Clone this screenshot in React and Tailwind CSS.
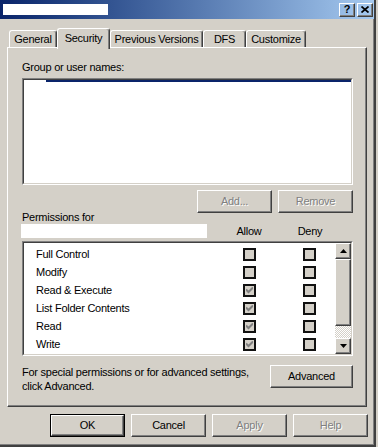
import React from "react";

const raised =
  "border border-t-white border-l-white border-r-[#404040] border-b-[#404040] shadow-[inset_-1px_-1px_0_#808080]";

function Sunken({ className = "", innerClass = "", children }) {
  return (
    <div className={"border border-t-[#808080] border-l-[#808080] border-r-white border-b-white " + className}>
      <div className={"h-full w-full border border-t-[#404040] border-l-[#404040] border-r-[#d4d0c8] border-b-[#d4d0c8] " + innerClass}>
        {children}
      </div>
    </div>
  );
}

function Btn({ children, disabled, def, className = "" }) {
  const base = "flex items-center justify-center h-[23px] w-[75px] box-border ";
  const txt = disabled ? " text-[#808080] [text-shadow:1px_1px_0_#ffffff]" : " text-black";
  if (def) {
    return (
      <div className={"h-[23px] w-[75px] border border-black " + className}>
        <div className={"flex h-full w-full items-center justify-center border border-t-white border-l-white border-r-[#404040] border-b-[#404040] shadow-[inset_-1px_-1px_0_#808080]" + txt}>
          {children}
        </div>
      </div>
    );
  }
  return <div className={base + raised + txt + " " + className}>{children}</div>;
}

function Check({ checked }) {
  return (
    <div className="flex h-[13px] w-[13px] items-center justify-center border-2 border-[#111111] bg-[#d4d0c8]">
      {checked && (
        <svg width="7" height="7" viewBox="0 0 7 7">
          <path d="M0 2.5 L2.5 5 L7 0.5" stroke="#808080" strokeWidth="2" fill="none" />
        </svg>
      )}
    </div>
  );
}

function Tab({ label, w, selected }) {
  if (selected) {
    return (
      <div
        className={
          "relative z-10 -mb-[2px] flex h-[21px] items-center justify-center rounded-t-[3px] border-t border-l border-r border-t-white border-l-white border-r-[#404040] bg-[#d4d0c8] pb-[2px] shadow-[inset_-1px_0_0_#808080] " +
          w
        }
      >
        {label}
      </div>
    );
  }
  return (
    <div
      className={
        "flex h-[17px] items-center justify-center rounded-t-[3px] border-t border-l border-r border-t-white border-l-white border-r-[#404040] shadow-[inset_-1px_0_0_#808080] " +
        w
      }
    >
      {label}
    </div>
  );
}

const perms = [
  ["Full Control", false],
  ["Modify", false],
  ["Read & Execute", true],
  ["List Folder Contents", true],
  ["Read", true],
  ["Write", true],
];

export default function App() {
  return (
    <div className="flex h-[447px] w-[378px] overflow-hidden bg-[#d4d0c8] font-['Liberation_Sans',Arial,sans-serif] text-[11px] leading-[13px] tracking-[-0.25px] text-black">
      <div className="flex h-[447px] w-[376px] flex-col border-r-2 border-b-2 border-r-[#404040] border-b-[#404040] shadow-[inset_-1px_-1px_0_#808080]">
        {/* title bar */}
        <div className="flex h-[19px] w-[374px] items-center bg-gradient-to-r from-[#0a246a] to-[#a6caf0] pr-[1px]">
          <div className="ml-[3px] h-[11px] w-[105px] bg-white" />
          <div className="flex-1" />
          <div className={"flex h-[14px] w-[16px] items-center justify-center text-[11px] font-bold leading-none " + raised}>?</div>
          <div className={"ml-[2px] flex h-[14px] w-[16px] items-center justify-center " + raised}>
            <svg width="8" height="7" viewBox="0 0 8 7">
              <path d="M0.5 0.5 L7.5 6.5 M7.5 0.5 L0.5 6.5" stroke="#000" strokeWidth="1.7" fill="none" />
            </svg>
          </div>
        </div>

        {/* tabs */}
        <div className="mt-[9px] flex h-[19px] items-end pl-[9px]">
          <Tab label="General" w="w-[48px]" />
          <Tab label="Security" w="w-[53px]" selected />
          <Tab label="Previous Versions" w="w-[93px]" />
          <Tab label="DFS" w="w-[43px]" />
          <Tab label="Customize" w="w-[60px]" />
        </div>

        {/* panel */}
        <div className="ml-[7px] flex h-[360px] w-[360px] flex-col border border-t-white border-l-white border-r-[#404040] border-b-[#404040] pl-[14px] shadow-[inset_-1px_-1px_0_#808080]">
          <div className="mt-[13px] h-[13px]">Group or user names:</div>
          <Sunken className="mt-[4px] h-[107px] w-[331px]" innerClass="bg-white">
            <div className="ml-[22px] h-[2px] bg-[#0a246a]" />
          </Sunken>
          <div className="mt-[5px] flex w-[331px] justify-end gap-[6px]">
            <Btn disabled>Add...</Btn>
            <Btn disabled>Remove</Btn>
          </div>
          <div className="-mt-[2px] h-[13px]">Permissions for</div>
          <div className="flex h-[14px] items-center">
            <div className="-ml-[1px] h-[14px] w-[186px] bg-white" />
            <div className="ml-[22px] w-[40px] text-center">Allow</div>
            <div className="ml-[21px] w-[40px] text-center">Deny</div>
          </div>
          <Sunken className="mt-[3px] h-[115px] w-[331px]" innerClass="bg-white flex">
            <div className="flex-1 pt-[2px]">
              {perms.map(([name, checked]) => (
                <div key={name} className="flex h-[18px] items-center">
                  <div className="w-[219px] pl-[12px]">{name}</div>
                  <Check checked={checked} />
                  <div className="w-[47px]" />
                  <Check checked={false} />
                </div>
              ))}
            </div>
            <div className="flex w-[16px] flex-col">
              <div className={"flex h-[16px] items-center justify-center bg-[#d4d0c8] " + raised}>
                <svg width="7" height="4" viewBox="0 0 7 4">
                  <path d="M3.5 0 L7 4 L0 4 Z" fill="#000" />
                </svg>
              </div>
              <div className={"h-[67px] bg-[#d4d0c8] " + raised} />
              <div className="flex-1 bg-[repeating-conic-gradient(#ffffff_0%_25%,#d4d0c8_0%_50%)] bg-[length:2px_2px]" />
              <div className={"flex h-[16px] items-center justify-center bg-[#d4d0c8] " + raised}>
                <svg width="7" height="4" viewBox="0 0 7 4">
                  <path d="M0 0 L7 0 L3.5 4 Z" fill="#000" />
                </svg>
              </div>
            </div>
          </Sunken>
          <div className="mt-[9px] flex w-[331px] items-start justify-between">
            <div className="leading-[14px]">
              <div>For special permissions or for advanced settings,</div>
              <div>click Advanced.</div>
            </div>
            <Btn className="w-[83px]">Advanced</Btn>
          </div>
        </div>

        {/* bottom buttons */}
        <div className="mt-[7px] flex gap-[6px] pl-[50px]">
          <Btn def>OK</Btn>
          <Btn>Cancel</Btn>
          <Btn disabled>Apply</Btn>
          <Btn disabled>Help</Btn>
        </div>
      </div>
    </div>
  );
}
